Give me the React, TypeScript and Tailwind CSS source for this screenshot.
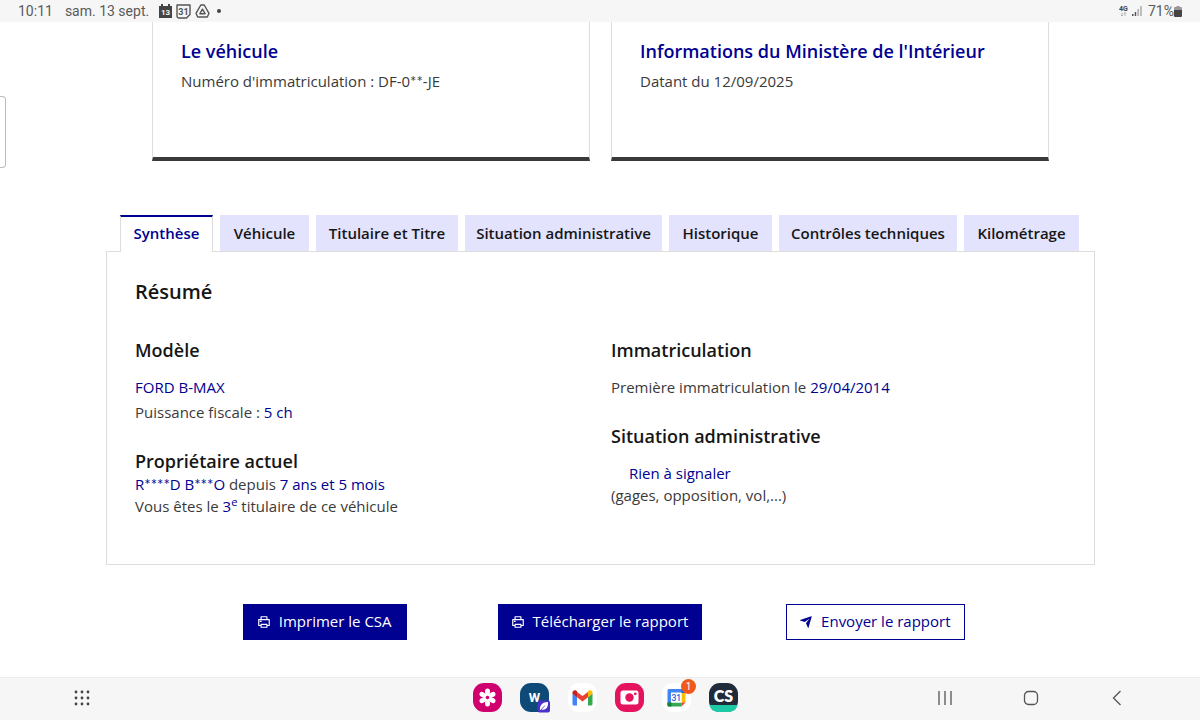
import { ReactNode, useState } from 'react';
import { RiPrinterLine, RiSendPlaneFill } from 'react-icons/ri';

const tabs = [
  'Synthèse',
  'Véhicule',
  'Titulaire et Titre',
  'Situation administrative',
  'Historique',
  'Contrôles techniques',
  'Kilométrage',
];

function StatusBar() {
  return (
    <header className="flex h-[22px] items-center justify-between bg-[#f6f6f6] pl-[18px] pr-[18px] font-['Roboto',sans-serif] text-sm text-[#5a5a5a]">
      <div className="flex items-center">
        <span>10:11</span>
        <span className="ml-3">sam. 13 sept.</span>
        <svg className="ml-2.5" width="13" height="14" viewBox="0 0 13 14" aria-hidden="true">
          <path d="M0 2h2V0h2v2h5V0h2v2h2v12H0z" fill="#444" />
          <text x="6.5" y="10.5" fontSize="8" fontWeight="700" textAnchor="middle" fill="#f6f6f6">13</text>
        </svg>
        <svg className="ml-1" width="15" height="15" viewBox="0 0 15 15" aria-hidden="true">
          <path d="M1 1h13v9.500L10.500 14H3a2 2 0 0 1-2-2z" fill="none" stroke="#555" strokeWidth="1.400" strokeLinejoin="round" />
          <text x="7.500" y="10.500" fontSize="9" fontWeight="700" textAnchor="middle" fill="#555">31</text>
        </svg>
        <svg className="ml-1" width="15" height="14" viewBox="0 0 15 14" fill="none" stroke="#555" strokeWidth="1.400" strokeLinejoin="round" aria-hidden="true">
          <path d="M5.800 1h3.400L14 9.300 12.300 13H2.700L1 9.300z" />
          <path d="M7.500 5.200l2.600 4.500H4.900z" />
        </svg>
        <span className="ml-[7px] size-1 rounded-full bg-[#444]" />
      </div>
      <div className="flex items-center">
        <svg width="9" height="12" viewBox="0 0 9 12" aria-hidden="true">
          <text x="4.500" y="6" fontSize="7" fontWeight="700" textAnchor="middle" fill="#444">4G</text>
          <path d="M3 7.500v3.500M1.800 9.800L3 11l1.200-1.200M6 11V7.500M4.800 8.700L6 7.500l1.200 1.200" fill="none" stroke="#aaa" strokeWidth="0.800" />
        </svg>
        <svg className="ml-1" width="10" height="10" viewBox="0 0 10 10" aria-hidden="true">
          <path d="M0 8h1.500v2H0zM2.700 6h1.500v4H2.700z" fill="#555" />
          <path d="M5.400 3h1.500v7H5.400zM8.200 0h1.500v10H8.200z" fill="#aaa" />
        </svg>
        <span className="ml-1.5">71%</span>
        <svg width="8" height="11" viewBox="0 0 8 11" aria-hidden="true">
          <path d="M2.500 0h3v1H7a1 1 0 0 1 1 1v2H0V2a1 1 0 0 1 1-1h1.500z" fill="#999" />
          <path d="M0 4h8v6a1 1 0 0 1-1 1H1a1 1 0 0 1-1-1z" fill="#444" />
        </svg>
      </div>
    </header>
  );
}

function InfoCard({ title, children }: { title: string; children: ReactNode }) {
  return (
    <article className="h-[139px] border-x border-b-4 border-x-[#dddddd] border-b-[#3a3a3a] px-7 pt-[15px]">
      <h2 className="text-lg leading-7 font-semibold text-[#000091]">{title}</h2>
      <p className="mt-1 leading-6">{children}</p>
    </article>
  );
}

function Heading({ children }: { children: ReactNode }) {
  return <h3 className="text-lg leading-6 font-semibold text-[#161616]">{children}</h3>;
}

function Value({ children }: { children: ReactNode }) {
  return <span className="text-[#000091]">{children}</span>;
}

// Hidden letters use Lato's narrower asterisk
function Masked({ text }: { text: string }) {
  return text.split(/(\*+)/).map((part, i) =>
    part.startsWith('*') ? <span key={i} className="font-['Lato',sans-serif]">{part}</span> : part
  );
}

function Summary() {
  return (
    <div className="border border-[#dddddd] px-7 pt-[26px] pb-[47px]">
      <h2 className="text-xl leading-7 font-semibold text-[#161616]">Résumé</h2>
      <div className="mt-8 grid grid-cols-2 gap-[21px]">
        <div>
          <Heading>Modèle</Heading>
          <div className="mt-[13px] leading-[25px]">
            <p><Value>FORD B-MAX</Value></p>
            <p>Puissance fiscale : <Value>5 ch</Value></p>
          </div>
          <div className="mt-6">
            <Heading>Propriétaire actuel</Heading>
            <div className="leading-[22px]">
              <p><Value><Masked text="R****D B***O" /></Value> depuis <Value>7 ans et 5 mois</Value></p>
              <p>Vous êtes le <Value>3<sup>e</sup></Value> titulaire de ce véhicule</p>
            </div>
          </div>
        </div>
        <div>
          <Heading>Immatriculation</Heading>
          <p className="mt-[13px] leading-[25px]">Première immatriculation le <Value>29/04/2014</Value></p>
          <div className="mt-6">
            <Heading>Situation administrative</Heading>
            <div className="mt-3.5 leading-[22px]">
              <p className="pl-[18px]"><Value>Rien à signaler</Value></p>
              <p>(gages, opposition, vol,...)</p>
            </div>
          </div>
        </div>
      </div>
    </div>
  );
}

function AppDock() {
  return (
    <div className="flex items-center gap-[18px]">
      <button type="button" aria-label="Galerie" className="size-[29px]">
        <svg viewBox="0 0 29 29" aria-hidden="true">
          <rect width="29" height="29" rx="11" fill="#d0006f" />
          <g fill="#fff">
            {[0, 60, 120, 180, 240, 300].map((angle) => (
              <ellipse key={angle} cx="14.500" cy="8.800" rx="2.500" ry="3.200" transform={`rotate(${angle} 14.500 14.500)`} />
            ))}
            <circle cx="14.500" cy="14.500" r="4" />
          </g>
          <circle cx="14.500" cy="14.500" r="1.800" fill="#d0006f" />
        </svg>
      </button>
      <button type="button" aria-label="Dictionnaire" className="size-[30px]">
        <svg viewBox="0 0 30 30" aria-hidden="true">
          <rect width="29" height="29" rx="11" fill="#0e4a78" />
          <text x="14.500" y="19" fontSize="13" fontWeight="700" textAnchor="middle" fill="#fff" className="font-['Roboto',sans-serif]">W</text>
          <rect x="17.500" y="17.500" width="12.500" height="12" rx="2" fill="#4a32c8" />
          <path d="M20 27.500c-.5-5.500 2.500-8.500 8-8.500 .5 5.500-2.500 8.500-6.500 7.500z" fill="#fff" />
          <path d="M19.500 28.500l5.500-6" stroke="#4a32c8" strokeWidth="0.800" />
        </svg>
      </button>
      <button type="button" aria-label="Gmail" className="size-[29px]">
        <svg viewBox="0 0 29 29" aria-hidden="true">
          <rect width="29" height="29" rx="11" fill="#fff" />
          <path d="M4.500 10.500l4.500 3.400V22.500H6A1.500 1.500 0 0 1 4.500 21z" fill="#4285f4" />
          <path d="M24.500 10.500L20 13.900V22.500h3a1.500 1.500 0 0 0 1.500-1.500z" fill="#34a853" />
          <path d="M9 8.900l5.500 4.200L20 8.900v5.300l-5.500 4.200L9 14.200z" fill="#ea4335" />
          <path d="M4.500 9.500c0-2 2.100-3 3.700-1.900l.8.600v6l-4.500-3.400z" fill="#c5221f" />
          <path d="M24.500 9.500c0-2-2.100-3-3.700-1.900l-.8.600v6l4.500-3.400z" fill="#fbbc04" />
        </svg>
      </button>
      <button type="button" aria-label="Appareil photo" className="size-[29px]">
        <svg viewBox="0 0 29 29" aria-hidden="true">
          <rect width="29" height="29" rx="11" fill="#e5125d" />
          <rect x="5.500" y="7.500" width="18" height="14" rx="2.500" fill="#fff" />
          <circle cx="14.500" cy="14.500" r="4.200" fill="#e5125d" />
          <circle cx="20.300" cy="10.800" r="1.400" fill="#e5125d" />
        </svg>
      </button>
      <button type="button" aria-label="Agenda, 1 notification" className="relative size-[29px]">
        <svg viewBox="0 0 29 29" aria-hidden="true">
          <rect width="29" height="29" rx="11" fill="#fff" />
          <path d="M7 6h13v4H9.500v13H7a1.500 1.500 0 0 1-1.500-1.500v-14A1.500 1.500 0 0 1 7 6z" fill="#4285f4" />
          <path d="M19.500 6H22a1.500 1.500 0 0 1 1.500 1.500V10h-4z" fill="#1967d2" />
          <path d="M19.500 10h4v9.500h-4z" fill="#fbbc04" />
          <path d="M5.500 19.500h14v4H7A1.500 1.500 0 0 1 5.500 22z" fill="#34a853" />
          <path d="M5.500 19.500h4v4H7A1.500 1.500 0 0 1 5.500 22z" fill="#188038" />
          <path d="M19.500 19.500h4l-4 4z" fill="#ea4335" />
          <path d="M9 9.500h10.500v10H9z" fill="#fff" />
          <text x="14.300" y="17.500" fontSize="8.500" fontWeight="500" textAnchor="middle" fill="#1967d2" className="font-['Roboto',sans-serif]">31</text>
        </svg>
        <span className="absolute -top-1 -right-[5px] flex size-[15px] items-center justify-center rounded-full bg-[#f0591e] font-['Roboto',sans-serif] text-[10px] leading-none text-white">1</span>
      </button>
      <button type="button" aria-label="CamScanner" className="size-[29px]">
        <svg viewBox="0 0 29 29" aria-hidden="true">
          <rect width="29" height="29" rx="11" fill="#1f2a3a" />
          <path d="M.5 22h28c-1.200 5-4.500 7-10 7h-8C5 29 1.700 27 .5 22z" fill="#1dc9a4" />
          <text x="14.500" y="18.500" fontSize="16" fontWeight="800" textAnchor="middle" fill="#fff" className="font-['Lato',sans-serif]">CS</text>
        </svg>
      </button>
    </div>
  );
}

function NavigationBar() {
  return (
    <nav className="grid h-[43px] grid-cols-[1fr_auto_1fr] items-center border-t border-[#ececec] bg-[#f6f6f6] pr-[63px] pb-[3px] pl-[74px]">
      <button type="button" aria-label="Applications" className="size-4">
        <svg viewBox="0 0 16 16" fill="#444" aria-hidden="true">
          {[2, 8, 14].map((y) => [2, 8, 14].map((x) => <circle key={`${x}-${y}`} cx={x} cy={y} r="1.400" />))}
        </svg>
      </button>
      <AppDock />
      <div className="flex items-center justify-end gap-[70px] pr-3 text-[#555]">
        <button type="button" aria-label="Récents" className="size-4">
          <svg viewBox="0 0 16 16" fill="none" stroke="currentColor" strokeWidth="1.300" aria-hidden="true">
            <path d="M2 1v14M8 1v14M14 1v14" />
          </svg>
        </button>
        <button type="button" aria-label="Accueil" className="size-4">
          <svg viewBox="0 0 16 16" fill="none" stroke="currentColor" strokeWidth="1.300" aria-hidden="true">
            <rect x="1.500" y="1.500" width="13" height="13" rx="4" />
          </svg>
        </button>
        <button type="button" aria-label="Retour" className="size-4">
          <svg viewBox="0 0 16 16" fill="none" stroke="currentColor" strokeWidth="1.300" aria-hidden="true">
            <path d="M11.500 1L4.500 8l7 7" />
          </svg>
        </button>
      </div>
    </nav>
  );
}

export default function App() {
  const [active, setActive] = useState('Synthèse');

  return (
    <div className="relative flex min-h-screen flex-col bg-white font-['Open_Sans',sans-serif] text-[15px] text-[#3a3a3a]">
      <StatusBar />
      {/* Edge panel handle */}
      <div className="absolute top-24 left-0 h-[72px] w-1.5 rounded-r border border-l-0 border-[#bbbbbb]" />

      <main className="flex-1 pr-[105px] pl-[106px]">
        <section className="grid grid-cols-2 gap-[21px] px-[46px]">
          <InfoCard title="Le véhicule">Numéro d'immatriculation : <Masked text="DF-0**-JE" /></InfoCard>
          <InfoCard title="Informations du Ministère de l'Intérieur">Datant du 12/09/2025</InfoCard>
        </section>

        <section className="mt-[54px]">
          <div role="tablist" className="grid h-9 grid-cols-[93fr_89fr_142fr_197fr_103fr_178fr_115fr] gap-[7px] pr-4 pl-3.5">
            {tabs.map((tab) => (
              <button
                key={tab}
                type="button"
                role="tab"
                aria-selected={tab === active}
                onClick={() => setActive(tab)}
                className={
                  tab === active
                    ? 'relative -mb-px border-x border-t-2 border-x-[#dddddd] border-t-[#000091] bg-white pb-[3px] font-semibold whitespace-nowrap text-[#000091]'
                    : 'bg-[#e3e3fd] font-semibold whitespace-nowrap text-[#161616]'
                }
              >
                {tab}
              </button>
            ))}
          </div>
          <Summary />
        </section>

        <section className="mx-auto mt-[39px] mb-[37px] grid max-w-[826px] grid-cols-3 justify-items-center font-medium">
          <button type="button" className="flex h-9 w-[164px] items-center justify-center gap-2 bg-[#000091] pr-0.5 pb-px whitespace-nowrap text-white">
            <RiPrinterLine className="size-3.5" />
            Imprimer le CSA
          </button>
          <button type="button" className="flex h-9 w-[204px] items-center justify-center gap-2 bg-[#000091] pr-0.5 pb-px whitespace-nowrap text-white">
            <RiPrinterLine className="size-3.5" />
            Télécharger le rapport
          </button>
          <button type="button" className="flex h-9 w-[179px] items-center justify-center gap-2 border border-[#000091] pr-0.5 pb-px whitespace-nowrap text-[#000091]">
            <RiSendPlaneFill className="size-3.5" />
            Envoyer le rapport
          </button>
        </section>
      </main>

      <NavigationBar />
    </div>
  );
}
